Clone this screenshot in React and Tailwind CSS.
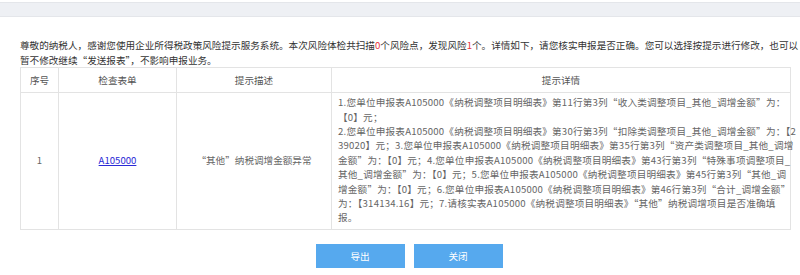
const DETAIL_LINES = [
  '1.您单位申报表A105000《纳税调整项目明细表》第11行第3列“收入类调整项目_其他_调增金额”为：',
  '【0】元；',
  '2.您单位申报表A105000《纳税调整项目明细表》第30行第3列“扣除类调整项目_其他_调增金额”为：【2',
  '39020】元；3.您单位申报表A105000《纳税调整项目明细表》第35行第3列“资产类调整项目_其他_调增',
  '金额”为：【0】元；4.您单位申报表A105000《纳税调整项目明细表》第43行第3列“特殊事项调整项目_',
  '其他_调增金额”为：【0】元；5.您单位申报表A105000《纳税调整项目明细表》第45行第3列“其他_调',
  '增金额”为：【0】元；6.您单位申报表A105000《纳税调整项目明细表》第46行第3列“合计_调增金额”',
  '为：【314134.16】元；7.请核实表A105000《纳税调整项目明细表》“其他”纳税调增项目是否准确填',
  '报。',
];

// wide Chinese quotes, as the page font draws them
function Wide({ text }) {
  return text.split(/([“”])/).map((part, i) =>
    part === '“' || part === '”' ? (
      <span key={i} className="[font-feature-settings:'fwid']">
        {part}
      </span>
    ) : (
      part
    )
  );
}

function RiskTable() {
  return (
    <table className="ml-[20px] w-[771px] table-fixed border-collapse text-[9.6px] leading-[14.4px]">
      <colgroup>
        <col className="w-[38px]" />
        <col className="w-[118px]" />
        <col className="w-[155px]" />
        <col />
      </colgroup>
      <thead>
        <tr className="h-[25px] text-[#555]">
          <th className="border border-[#e3e3e3] font-normal">序号</th>
          <th className="border border-[#e3e3e3] font-normal">检查表单</th>
          <th className="border border-[#e3e3e3] font-normal">提示描述</th>
          <th className="border border-[#e3e3e3] font-normal">提示详情</th>
        </tr>
      </thead>
      <tbody>
        <tr className="text-[#666]">
          <td className="border border-[#e3e3e3] pt-[2px] pb-[4px] text-center align-middle">1</td>
          <td className="border border-[#e3e3e3] pt-[2px] pb-[4px] text-center align-middle">
            <a className="text-[#2a2ad6] underline">A105000</a>
          </td>
          <td className="border border-[#e3e3e3] pt-[2px] pb-[4px] text-center align-middle">
            <Wide text="“其他”纳税调增金额异常" />
          </td>
          <td className="border border-[#e3e3e3] pt-[2px] pb-[4px] pl-[6px] text-left align-middle whitespace-nowrap tracking-[0.2px]">
            {DETAIL_LINES.map((line, i) => (
              <div key={i}>
                <Wide text={line} />
              </div>
            ))}
          </td>
        </tr>
      </tbody>
    </table>
  );
}

export default function App() {
  return (
    <div
      lang="zh-CN"
      className="w-[800px] h-[275px] overflow-hidden bg-white"
      style={{ fontFamily: '"Noto Sans CJK SC", "Noto Sans", sans-serif' }}
    >
      <div className="mt-[2px] h-[15px] bg-[#eef0f4] border-t border-b border-[#e4e6ea]" />

      <p className="mt-[21px] px-[20px] text-[9.6px] leading-[14.6px] text-[#333] whitespace-nowrap">
        尊敬的纳税人，感谢您使用企业所得税政策风险提示服务系统。本次风险体检共扫描
        <span className="text-[#e8333c]">0</span>
        个风险点，发现风险<span className="text-[#e8333c]">1</span>
        个。详情如下，请您核实申报是否正确。您可以选择按提示进行修改，也可以
        <br />
        暂不修改继续<Wide text="“发送报表”" />，不影响申报业务。
      </p>

      <RiskTable />

      <div className="mt-[14px] flex justify-center gap-[9px] pl-[18px]">
        <button
          type="button"
          className="h-[24px] w-[89px] bg-[#56a9ee] text-[9.6px] text-white"
        >
          导出
        </button>
        <button
          type="button"
          className="h-[24px] w-[89px] bg-[#56a9ee] text-[9.6px] text-white"
        >
          关闭
        </button>
      </div>
    </div>
  );
}
